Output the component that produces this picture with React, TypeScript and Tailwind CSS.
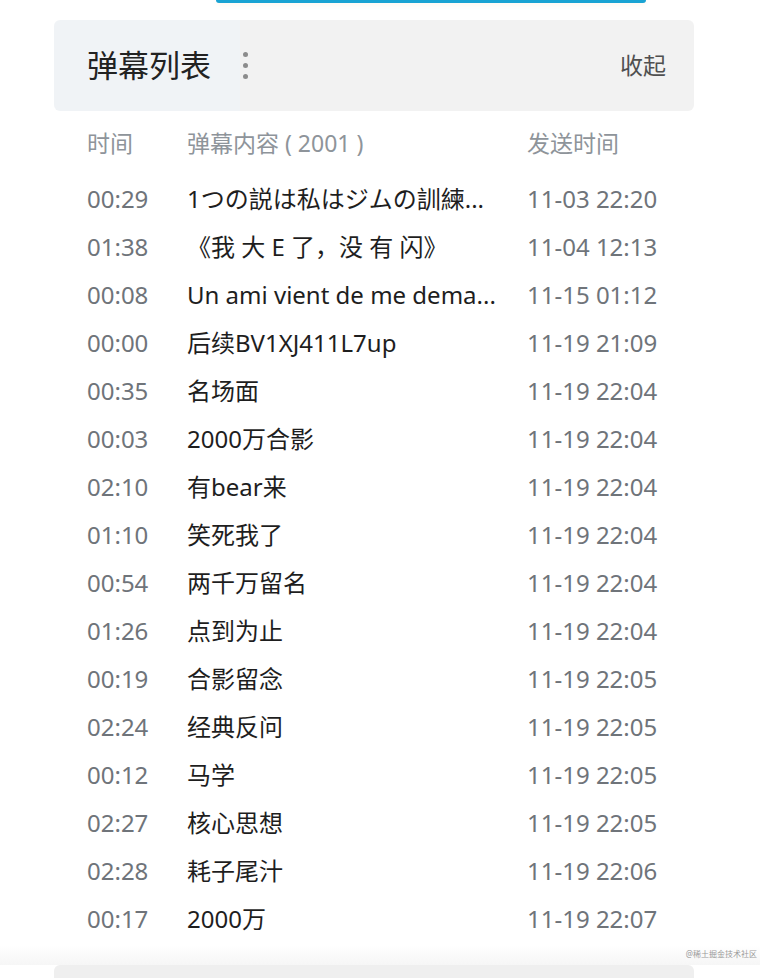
import React from 'react';

interface Danmaku {
  time: string;
  content: string;
  sentAt: string;
}

const danmakuList: Danmaku[] = [
  { time: '00:29', content: '1つの説は私はジムの訓練...', sentAt: '11-03 22:20' },
  { time: '01:38', content: '《我 大 E 了，没 有 闪》', sentAt: '11-04 12:13' },
  { time: '00:08', content: 'Un ami vient de me dema...', sentAt: '11-15 01:12' },
  { time: '00:00', content: '后续BV1XJ411L7up', sentAt: '11-19 21:09' },
  { time: '00:35', content: '名场面', sentAt: '11-19 22:04' },
  { time: '00:03', content: '2000万合影', sentAt: '11-19 22:04' },
  { time: '02:10', content: '有bear来', sentAt: '11-19 22:04' },
  { time: '01:10', content: '笑死我了', sentAt: '11-19 22:04' },
  { time: '00:54', content: '两千万留名', sentAt: '11-19 22:04' },
  { time: '01:26', content: '点到为止', sentAt: '11-19 22:04' },
  { time: '00:19', content: '合影留念', sentAt: '11-19 22:05' },
  { time: '02:24', content: '经典反问', sentAt: '11-19 22:05' },
  { time: '00:12', content: '马学', sentAt: '11-19 22:05' },
  { time: '02:27', content: '核心思想', sentAt: '11-19 22:05' },
  { time: '02:28', content: '耗子尾汁', sentAt: '11-19 22:06' },
  { time: '00:17', content: '2000万', sentAt: '11-19 22:07' },
];

const App: React.FC = () => {
  return (
    <div className="relative h-[978px] w-[760px] overflow-hidden bg-white font-['Noto_Sans','Noto_Sans_CJK_SC',sans-serif]">
      {/* player progress bar peeking in from above */}
      <div className="ml-[216px] h-[3px] w-[430px] rounded-b-sm bg-[#1aa3d3] shadow-[0_2px_4px_rgba(255,200,120,0.15)]" />

      <div className="ml-[54px] mt-[17px] w-[640px]">
        {/* Header */}
        <div className="flex h-[91px] items-center rounded-md bg-[linear-gradient(90deg,#f0f3f6_0%,#f0f3f6_29%,#f2f2f2_29%)] pl-[33px] pr-[28px]">
          <h2 className="text-[31px] leading-none text-[#222]">弹幕列表</h2>
          <div className="ml-[32px] flex flex-col gap-[6px]">
            <span className="h-[5px] w-[5px] rounded-full bg-[#8c8c8c]" />
            <span className="h-[5px] w-[5px] rounded-full bg-[#8c8c8c]" />
            <span className="h-[5px] w-[5px] rounded-full bg-[#8c8c8c]" />
          </div>
          <button className="ml-auto text-[23px] leading-none text-[#505050]">收起</button>
        </div>

        {/* Column headers */}
        <div className="flex h-[64px] items-center pl-[33px] text-[23px] text-[#8e949a]">
          <span className="w-[100px]">时间</span>
          <span className="w-[340px]">弹幕内容 ( 2001 )</span>
          <span>发送时间</span>
        </div>

        {/* Rows */}
        <ul>
          {danmakuList.map((d, i) => (
            <li key={i} className="flex h-[48px] items-center pl-[33px] text-[24px]">
              <span className="w-[100px] text-[#6f747a]">{d.time}</span>
              <span className="w-[340px] whitespace-nowrap text-[#1e1e1e]">{d.content}</span>
              <span className="text-[#6f747a]">{d.sentAt}</span>
            </li>
          ))}
        </ul>
      </div>

      {/* bottom fade + next panel */}
      <div className="mt-[2px] h-[20px] bg-gradient-to-b from-white to-[#f6f6f6]" />
      <div className="ml-[54px] h-[20px] w-[640px] rounded-t-md bg-[#efefef]" />

      <span className="absolute right-[3px] top-[950px] text-[8px] leading-none text-[#9a9a9a]">@稀土掘金技术社区</span>
    </div>
  );
};

export default App;
